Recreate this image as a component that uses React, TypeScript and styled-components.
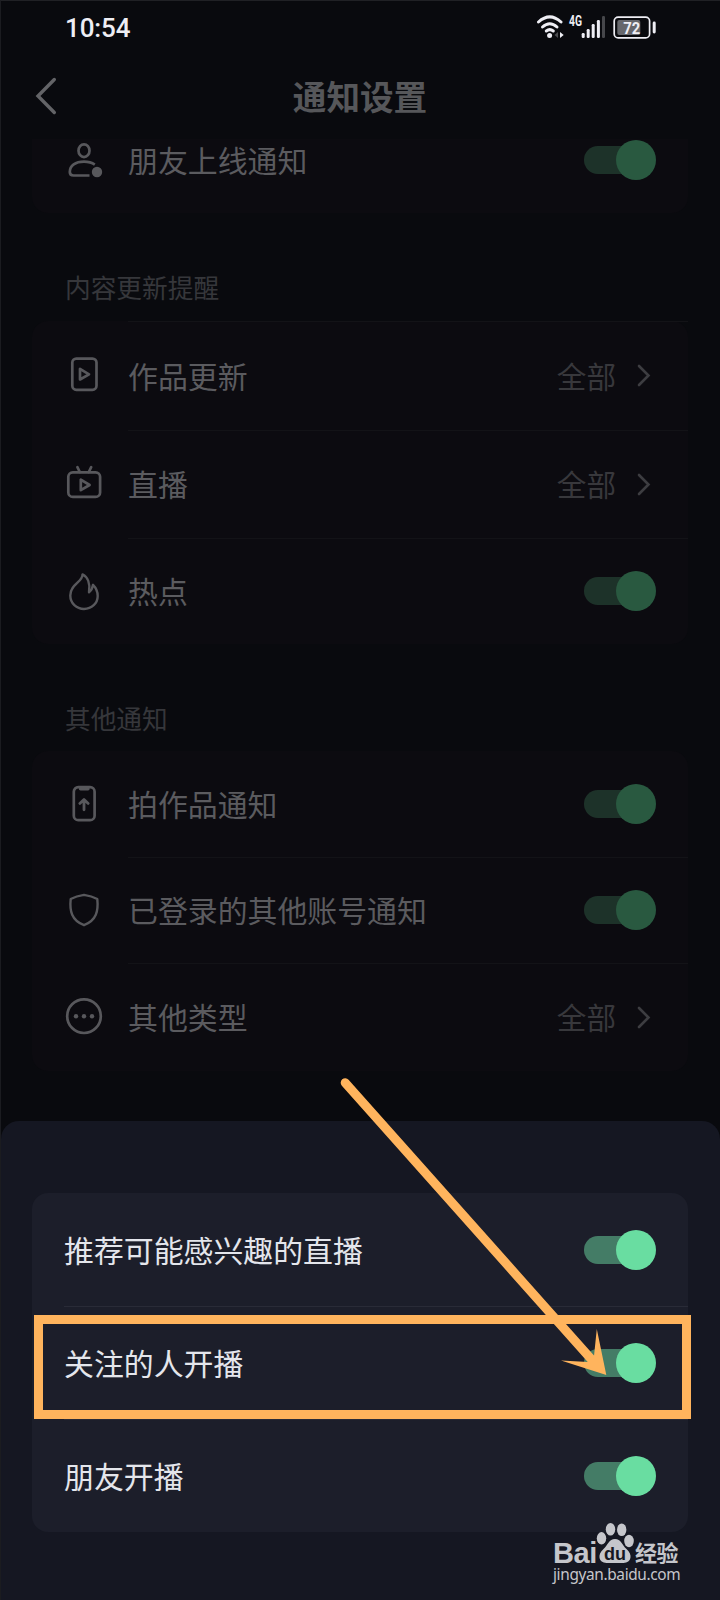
import React from "react";
import styled, { createGlobalStyle } from "styled-components";

const GlobalStyle = createGlobalStyle`
  *, *::before, *::after { box-sizing: border-box; }
  body { margin: 0; background: #090a0e; }
`;

const Screen = styled.main`
  position: relative;
  display: flex;
  flex-direction: column;
  width: 720px;
  height: 1600px;
  overflow: hidden;
  background: #090a0e;
  border-top: 1px solid #202125;
  border-left: 1px solid #1b1c20;
  font-family: "Noto Sans CJK SC", sans-serif;
`;

const StatusBar = styled.header`
  display: flex;
  align-items: center;
  justify-content: space-between;
  flex: none;
  height: 54px;
  padding: 0 64px 0 64px;
`;

const Clock = styled.span`
  font: 500 26px/30px Roboto, sans-serif;
  letter-spacing: -0.1px;
  color: #eeeef4;
`;

const StatusIcons = styled.svg`
  width: 120px;
  height: 26px;
  margin-top: -3px;
  color: #eeeef4;
`;

const NavBar = styled.nav`
  display: grid;
  grid-template-columns: 60px 1fr 60px;
  align-items: center;
  flex: none;
  height: 84px;
  padding-right: 1px;
`;

const BackIcon = styled.svg`
  width: 24px;
  height: 40px;
  margin-left: 33px;
  margin-top: -2px;
  color: #636467;
`;

const Title = styled.h1`
  margin: -2px 0 0;
  text-align: center;
  font-size: 33.6px;
  font-weight: 700;
  line-height: 44px;
  color: #56575a;
`;

const List = styled.section`
  flex: none;
  height: 982px;
  padding: 0 32px 0 31px;
`;

const SectionTitle = styled.h2<{ $height: number; $drop: number }>`
  display: flex;
  align-items: center;
  height: ${(p) => p.$height}px;
  margin: 0;
  padding: ${(p) => p.$drop}px 0 0 33px;
  font-size: 25.7px;
  font-weight: 400;
  line-height: 32px;
  color: #36373b;
`;

const Card = styled.div<{ $bright?: boolean; $flatTop?: boolean }>`
  background: ${(p) => (p.$bright ? "#1c1e2a" : "#0c0b10")};
  border-radius: ${(p) => (p.$flatTop ? "0 0 16px 16px" : "16px")};
`;

const Row = styled.div<{ $height: number; $indent: number; $line?: string }>`
  display: flex;
  align-items: center;
  height: ${(p) => p.$height}px;
  padding: 0 32px;
  background: linear-gradient(${(p) => p.$line ?? "transparent"}, ${(p) => p.$line ?? "transparent"})
    ${(p) => p.$indent}px 0 / 100% 1px no-repeat;
`;

const RowIcon = styled.svg`
  flex: none;
  width: 40px;
  height: 40px;
  margin-right: 24px;
  fill: none;
  stroke: #58585c;
  stroke-width: 2.7;
  stroke-linecap: round;
  stroke-linejoin: round;
`;

const Label = styled.span<{ $bright?: boolean }>`
  flex: 1;
  margin-top: ${(p) => (p.$bright ? -1 : -2)}px;
  font-size: 29.9px;
  line-height: 40px;
  color: ${(p) => (p.$bright ? "#e4e6ec" : "#5b5b5f")};
`;

const Value = styled.span`
  margin-top: 0;
  font-size: 29.6px;
  font-weight: 400;
  line-height: 40px;
  color: #38383c;
`;

const Chevron = styled.svg`
  width: 16px;
  height: 26px;
  margin: -1px 4px 0 20px;
  fill: none;
  stroke: #3d3d41;
  stroke-width: 2.6;
  stroke-linecap: round;
`;

const Track = styled.span<{ $bright?: boolean }>`
  display: flex;
  align-items: center;
  justify-content: flex-end;
  width: 72px;
  height: 28px;
  border-radius: 14px 0 0 14px;
  background: linear-gradient(
    to right,
    ${(p) => (p.$bright ? "#447c66" : "#1d3229")} 56px,
    transparent 56px
  );
`;

const Knob = styled.span<{ $bright?: boolean }>`
  flex: none;
  width: 40px;
  height: 40px;
  border-radius: 50%;
  background: ${(p) => (p.$bright ? "#69dda1" : "#295940")};
`;

const Sheet = styled.section`
  flex: 1;
  padding: 72px 32px 0 31px;
  border-radius: 18px 18px 0 0;
  background: #151722;
`;

const Highlight = styled.div`
  position: absolute;
  left: 33px;
  top: 1314px;
  width: 657px;
  height: 104px;
  border: 9px solid #ffb45d;
`;

const Arrow = styled.svg`
  position: absolute;
  left: 319px;
  top: 1059px;
  width: 320px;
  height: 340px;
`;

const Watermark = styled.div`
  position: absolute;
  left: 552px;
  top: 1521px;
  width: 132px;
  color: #c5c6cb;
`;

const Brand = styled.div`
  display: flex;
  align-items: flex-end;
  height: 43px;
`;

const BrandLatin = styled.span`
  width: 43px;
  font: 700 29px/28px "Liberation Sans", sans-serif;
  letter-spacing: -0.4px;
  margin-bottom: -2px;
`;

const Paw = styled.svg`
  width: 38px;
  height: 42px;
  margin-bottom: 1px;
`;

const BrandHan = styled.span`
  margin-left: 1px;
  margin-bottom: 1px;
  font-size: 22px;
  font-weight: 700;
  line-height: 26px;
  letter-spacing: -0.4px;
`;

const Site = styled.div`
  font: 400 15.4px/20px "Noto Sans", sans-serif;
  letter-spacing: -0.35px;
  white-space: nowrap;
`;

const Switch = ({ bright }: { bright?: boolean }) => (
  <Track $bright={bright}>
    <Knob $bright={bright} />
  </Track>
);

const ValueLink = () => (
  <>
    <Value>全部</Value>
    <Chevron viewBox="0 0 16 26">
      <path d="M3 4 L12.5 13.5 L3 23" />
    </Chevron>
  </>
);

const icons: Record<string, React.ReactNode> = {
  friend: (
    <>
      <ellipse cx="20" cy="10.7" rx="5.5" ry="6.4" />
      <path d="M25.5 35.5 H9.5 Q5.8 35.5 5.8 32 C5.8 25.5 11.5 21.7 20 21.7 C24.5 21.7 28 22.7 30.8 24.6" strokeLinecap="butt" />
      <circle cx="33" cy="32" r="5.2" fill="#58585c" stroke="none" />
    </>
  ),
  works: (
    <>
      <rect x="8.3" y="2.6" width="24.2" height="31.2" rx="4" />
      <path d="M16 12.9 V23.5 L25 18.3 Z" />
    </>
  ),
  live: (
    <>
      <rect x="4.3" y="8.3" width="31.8" height="24.6" rx="4.5" />
      <path d="M13.4 3.2 L15.8 8 M27.2 3.2 L24.8 8 M16.8 15.6 V26.2 L25.6 21 Z" />
    </>
  ),
  fire: (
    <path
      d="M18.5 3.4 C19 11 6.3 13 6.3 24.5 C6.3 32.3 12.5 38 20 38 C27.7 38 33.7 32.3 33.7 25 C33.7 19.5 31.8 16.5 29 13.8 C28.6 17 27.2 19.5 25 21.2 C26.3 13 24 6 18.5 3.4 Z"
      strokeWidth="2.4"
    />
  ),
  upload: (
    <>
      <rect x="9.8" y="3.2" width="20.8" height="33" rx="4.5" />
      <path d="M16.5 4.8 H24" strokeWidth="3.4" />
      <path d="M20 25.8 V16 M15.8 19.4 L20 15.4 L24.2 19.4" strokeWidth="2.8" />
    </>
  ),
  shield: (
    <path
      d="M20 4.9 C24.5 5.6 29.5 7 33.3 9 C34.5 21 32.5 30.5 20 35.2 C7.5 30.5 5.5 21 6.7 9 C10.5 7 15.5 5.6 20 4.9 Z"
      strokeWidth="2.4"
    />
  ),
  more: (
    <>
      <circle cx="20" cy="19.2" r="16.8" />
      <g fill="#58585c" stroke="none">
        <circle cx="12" cy="19.2" r="2.2" />
        <circle cx="20" cy="19.2" r="2.2" />
        <circle cx="28" cy="19.2" r="2.2" />
      </g>
    </>
  ),
};

type ItemProps = { icon: string; label: string; height: number; toggle?: boolean; line?: boolean };

const Item = ({ icon, label, height, toggle, line }: ItemProps) => (
  <Row $height={height} $indent={96} $line={line ? "#131317" : undefined}>
    <RowIcon viewBox="0 0 40 40">{icons[icon]}</RowIcon>
    <Label>{label}</Label>
    {toggle ? <Switch /> : <ValueLink />}
  </Row>
);

const liveOptions = ["推荐可能感兴趣的直播", "关注的人开播", "朋友开播"];

export default function App() {
  return (
    <>
      <GlobalStyle />
      <Screen>
        <StatusBar>
          <Clock>10:54</Clock>
          <StatusIcons viewBox="536 13 120 26">
            <g fill="none" stroke="currentColor" strokeWidth="3" strokeLinecap="round">
              <path d="M538.5 21 Q549.8 10.8 561 21" />
              <path d="M542.5 26 Q549.8 19.4 557 26" />
              <path d="M546.3 30 Q549.8 27.3 553.3 30" />
            </g>
            <circle cx="549.6" cy="34.5" r="2.5" fill="currentColor" />
            <path d="M558 31 V37 L554.5 34 Z" fill="#4b4c50" />
            <path d="M560 31 V37 L563.7 34 Z" fill="currentColor" />
            <text x="569" y="24.9" fontFamily="Roboto, sans-serif" fontWeight="700" fontSize="14" textLength="13" lengthAdjust="spacingAndGlyphs" fill="currentColor">4G</text>
            <g fill="currentColor">
              <rect x="581.7" y="32" width="3" height="5" rx="1.2" />
              <rect x="586.7" y="28" width="3" height="9" rx="1.2" />
              <rect x="591.7" y="23" width="3" height="14" rx="1.2" />
              <rect x="596.9" y="19" width="3" height="18" rx="1.2" />
              <rect x="602" y="15" width="3" height="22" rx="1.2" fill="#46474b" />
              <rect x="652.7" y="20.5" width="3" height="12" rx="1.4" />
            </g>
            <rect x="614.2" y="16.1" width="35.4" height="20.8" rx="4" fill="none" stroke="currentColor" strokeWidth="1.7" />
            <rect x="617.3" y="19" width="23" height="15" rx="2" fill="#66676c" />
            <text x="631.8" y="32.8" textAnchor="middle" fontFamily="Roboto, sans-serif" fontWeight="700" fontSize="17" textLength="17" lengthAdjust="spacingAndGlyphs" fill="currentColor">72</text>
          </StatusIcons>
        </StatusBar>

        <NavBar>
          <BackIcon viewBox="0 0 24 40" fill="none" stroke="currentColor" strokeWidth="3.4" strokeLinecap="round">
            <path d="M20.3 3.5 L4 20 L20.3 36.5" />
          </BackIcon>
          <Title>通知设置</Title>
        </NavBar>

        <List>
          <Card $flatTop>
            <Item icon="friend" label="朋友上线通知" height={42} toggle />
            <Row $height={32} $indent={0} />
          </Card>

          <SectionTitle $height={108} $drop={39}>内容更新提醒</SectionTitle>
          <Card>
            <Item icon="works" label="作品更新" height={109} line />
            <Item icon="live" label="直播" height={108} line />
            <Item icon="fire" label="热点" height={106} toggle line />
          </Card>

          <SectionTitle $height={107} $drop={41}>其他通知</SectionTitle>
          <Card>
            <Item icon="upload" label="拍作品通知" height={106} toggle />
            <Item icon="shield" label="已登录的其他账号通知" height={106} toggle line />
            <Item icon="more" label="其他类型" height={108} line />
          </Card>
        </List>

        <Sheet>
          <Card $bright>
            {liveOptions.map((label, i) => (
              <Row key={label} $height={113} $indent={32} $line={i > 0 ? "#292b37" : undefined}>
                <Label $bright>{label}</Label>
                <Switch bright />
              </Row>
            ))}
          </Card>
        </Sheet>

        <Highlight />
        <Arrow viewBox="320 1060 320 340">
          <path d="M345.2 1082.7 L592 1360" stroke="#ffb45d" strokeWidth="9" strokeLinecap="round" />
          <path d="M606.3 1375 L596.8 1329 L594 1356 L588 1362 L561 1360.5 Z" fill="#ffb45d" />
        </Arrow>

        <Watermark>
          <Brand>
            <BrandLatin>Bai</BrandLatin>
            <Paw viewBox="596 1522 38 42">
              <g fill="currentColor">
                <ellipse cx="601.5" cy="1538.3" rx="4.7" ry="6.2" />
                <ellipse cx="610.5" cy="1529.3" rx="4.7" ry="6.3" />
                <ellipse cx="621.7" cy="1529.8" rx="4.7" ry="6.3" />
                <ellipse cx="629" cy="1541" rx="4.8" ry="6.2" />
                <path d="M615 1539 C609 1539 608 1545 603.5 1549 C597 1554.5 598.5 1563 606.5 1563 H623.5 C631.5 1563 633 1554.5 626.5 1549 C622 1545 621 1539 615 1539 Z" />
              </g>
              <text x="615" y="1559.5" textAnchor="middle" fontFamily="Liberation Sans, sans-serif" fontWeight="700" fontSize="18" fill="#151722">du</text>
            </Paw>
            <BrandHan>经验</BrandHan>
          </Brand>
          <Site>jingyan.baidu.com</Site>
        </Watermark>
      </Screen>
    </>
  );
}
